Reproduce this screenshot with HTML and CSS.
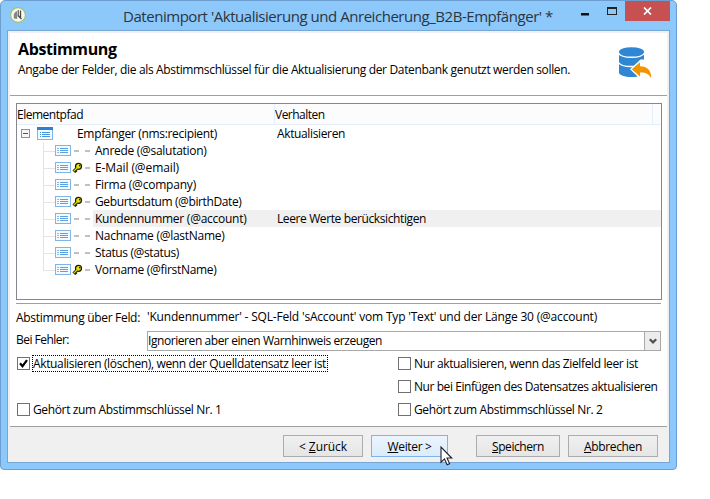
FILE: index.html
```
<!DOCTYPE html>
<html lang="de">
<head>
<meta charset="utf-8">
<title>Datenimport</title>
<link rel="stylesheet" href="styles.css">
</head>
<body>
<svg class="defs" width="0" height="0" aria-hidden="true">
  <defs>
    <g id="branch" shape-rendering="crispEdges">
      <path d="M27 9.5H38" stroke="#e4e4e4"/>
      <rect x="38.5" y="3.5" width="15" height="10" fill="#f4faff" stroke="#7fb6e8"/>
      <path d="M40 6.500h2M40 8.500h2M40 10.500h2" stroke="#8abcec"/>
      <path d="M43 6.500h8M43 8.500h8M43 10.500h8" stroke="#5ba1e2"/>
    </g>
    <g id="trunk"><path d="M26.500 0V17" stroke="#e4e4e4" shape-rendering="crispEdges"/></g>
    <g id="trunk-end"><path d="M26.500 0V10" stroke="#e4e4e4" shape-rendering="crispEdges"/></g>
    <g id="dash1"><rect x="57" y="8" width="5" height="2" fill="#c0c0c0"/></g>
    <g id="dash2"><rect x="68" y="8" width="5" height="2" fill="#c0c0c0"/></g>
    <g id="key">
      <path d="M60.500 8.500L56.500 12.500M58 11.500l1.500 1.500" stroke="#222200" stroke-width="3"/>
      <circle cx="61.500" cy="7.300" r="3" fill="#e8dd10" stroke="#222200" stroke-width="1.300"/>
      <path d="M60.500 8.500L56.800 12.200" stroke="#e8dd10" stroke-width="1.200"/>
      <rect x="62" y="6" width="1.300" height="1.300" fill="#222200"/>
    </g>
  </defs>
</svg>

<div class="window">
  <header class="titlebar">
    <svg class="app-icon" width="16" height="16" viewBox="0 0 16 16">
      <circle cx="8" cy="8" r="7.400" fill="#f8f8f4" stroke="#9fbf6a" stroke-width="1.100"/>
      <path d="M3.800 11.500V7l2-2.500 1.400-.5v8z" fill="#858585"/>
      <path d="M8.300 3v6" stroke="#666" stroke-width="1.200"/>
      <path d="M10.500 3.500v7" stroke="#444" stroke-width="1.300"/>
      <path d="M8 8.500l3.500 3.500" stroke="#444" stroke-width="1.200"/>
    </svg>
    <h1 class="title">Datenimport 'Aktualisierung und Anreicherung_B2B-Empfänger' *</h1>
    <svg class="min" width="8" height="3"><rect width="8" height="2.500" fill="#111"/></svg>
    <svg class="max" width="10" height="8" shape-rendering="crispEdges"><rect x=".5" y="1" width="9" height="6.500" fill="none" stroke="#222"/><path d="M0 1h10" stroke="#222" stroke-width="2"/></svg>
    <div class="close"><svg width="9" height="8" viewBox="0 0 9 8"><path d="M1 .5l7 7M8 .5l-7 7" stroke="#fff" stroke-width="1.700"/></svg></div>
  </header>

  <main class="client">
    <div class="page">
      <section class="intro">
        <div>
          <h2>Abstimmung</h2>
          <p class="t-intro">Angabe der Felder, die als Abstimmschlüssel für die Aktualisierung der Datenbank genutzt werden sollen.</p>
        </div>
        <svg class="db" width="34" height="34" viewBox="0 0 34 34">
          <path d="M1 5v20.500c0 2.700 5.600 4.500 12.500 4.500S26 28.200 26 25.500V5z" fill="#2f86d3"/>
          <ellipse cx="13.500" cy="4.700" rx="12.500" ry="4.500" fill="#2f86d3"/>
          <path d="M.5 6C2 9 7 10.300 13.500 10.300S25 9 26.500 6M.5 15.500c1.500 2.800 6.500 4 12.500 4 2 0 4-.2 6-.6" fill="none" stroke="#fff" stroke-width="1.400"/>
          <path d="M22.500 12.500L12 22.300l9.500 9h5.500V12.500z" fill="#fff"/>
          <path d="M13.800 22.300l8.200-7v3.900c7 .2 11.500 4 11.200 12.200-2-4.200-5.200-6-11.200-5.800v4z" fill="#f29400"/>
        </svg>
      </section>

      <section class="list">
        <div class="head"><span class="t-path">Elementpfad</span><span class="t-behaviour">Verhalten</span><span></span></div>
        <div class="row root">
          <svg width="60" height="17">
            <g shape-rendering="crispEdges"><rect x="4.500" y="4.500" width="8" height="8" fill="#f6f6f6" stroke="#919191"/><path d="M6 8.500h5" stroke="#3c50a0"/>
            <rect x="20.500" y="3.500" width="15" height="11" fill="#f4faff" stroke="#7fb6e8"/><path d="M20 3.500h16" stroke="#2f80d0" stroke-width="3"/>
            <path d="M23 7.500h1M23 9.500h1M23 11.500h1M25 7.500h8M25 9.500h8M25 11.500h8" stroke="#4595df"/></g>
          </svg><span class="t-recipient">Empfänger (nms:recipient)</span><span class="t-update">Aktualisieren</span>
        </div>
        <div class="row"><svg width="76" height="17"><use href="#trunk"/><use href="#branch"/><use href="#dash1"/><use href="#dash2"/></svg><span class="t-salutation">Anrede (@salutation)</span></div>
        <div class="row"><svg width="76" height="17"><use href="#trunk"/><use href="#branch"/><use href="#key"/><use href="#dash2"/></svg><span class="t-email">E-Mail (@email)</span></div>
        <div class="row"><svg width="76" height="17"><use href="#trunk"/><use href="#branch"/><use href="#dash1"/><use href="#dash2"/></svg><span class="t-company">Firma (@company)</span></div>
        <div class="row"><svg width="76" height="17"><use href="#trunk"/><use href="#branch"/><use href="#key"/><use href="#dash2"/></svg><span class="t-birth">Geburtsdatum (@birthDate)</span></div>
        <div class="row selected"><svg width="76" height="17"><use href="#trunk"/><use href="#branch"/><use href="#dash1"/><use href="#dash2"/></svg><span class="t-account">Kundennummer (@account)</span><span class="t-empty">Leere Werte berücksichtigen</span></div>
        <div class="row"><svg width="76" height="17"><use href="#trunk"/><use href="#branch"/><use href="#dash1"/><use href="#dash2"/></svg><span class="t-last">Nachname (@lastName)</span></div>
        <div class="row"><svg width="76" height="17"><use href="#trunk"/><use href="#branch"/><use href="#dash1"/><use href="#dash2"/></svg><span class="t-status">Status (@status)</span></div>
        <div class="row"><svg width="76" height="17"><use href="#trunk-end"/><use href="#branch"/><use href="#key"/><use href="#dash2"/></svg><span class="t-first">Vorname (@firstName)</span></div>
      </section>

      <section class="form">
        <div class="field first"><span class="label t-via">Abstimmung über Feld:</span><span class="t-sql">'Kundennummer' - SQL-Feld 'sAccount' vom Typ 'Text' und der Länge 30 (@account)</span></div>
        <div class="field second"><span class="label t-error">Bei Fehler:</span>
          <div class="select"><span class="t-ignore">Ignorieren aber einen Warnhinweis erzeugen</span><i><svg width="8" height="7" viewBox="0 0 8 7"><path d="M.8 1.200L4 4.400l3.200-3.200" fill="none" stroke="#505050" stroke-width="2.200"/></svg></i></div>
        </div>
        <div class="checks">
          <label><b class="box"><svg width="9" height="9" viewBox="0 0 9 9"><path d="M1 4.300l2.500 2.900L8 1.200" fill="none" stroke="#000" stroke-width="2.200"/></svg></b><span class="focus t-clear">Aktualisieren (löschen), wenn der Quelldatensatz leer ist</span></label>
          <label><b class="box"></b><span class="t-target">Nur aktualisieren, wenn das Zielfeld leer ist</span></label>
          <span></span>
          <label><b class="box"></b><span class="t-insert">Nur bei Einfügen des Datensatzes aktualisieren</span></label>
          <label><b class="box"></b><span class="t-key">Gehört zum Abstimmschlüssel Nr. 1</span></label>
          <label><b class="box"></b><span class="t-key">Gehört zum Abstimmschlüssel Nr. 2</span></label>
        </div>
      </section>
    </div>

    <footer class="actions">
      <div class="button back"><span>&lt; <u>Z</u>urück</span></div>
      <div class="button next"><span><u>W</u>eiter &gt;</span>
        <svg class="cursor" width="13" height="20" viewBox="0 0 13 20"><path d="M1 1v15.200l3.500-3.300 2.600 5.800 2.500-1.100-2.600-5.600h4.700z" fill="#fff" stroke="#20202a" stroke-width="1.100"/></svg>
      </div>
      <div class="button save"><span><u>S</u>peichern</span></div>
      <div class="button cancel"><span><u>A</u>bbrechen</span></div>
    </footer>
  </main>
</div>
</body>
</html>
```
FILE: styles.css
```
* { box-sizing: border-box; }
body { margin: 0; background: #fff; color: #000; font: 12px/17px "Open Sans", "Noto Sans", sans-serif; overflow: hidden; }
h1, h2, p { margin: 0; font-weight: normal; }
svg { display: block; flex: none; }
.defs { position: absolute; }

.window { width: 677px; height: 470px; padding: 0 6px; background: #8dc8fb; border: 1px solid #6c9fcf; border-radius: 5px 5px 4px 4px; }

.titlebar { height: 29px; display: flex; align-items: flex-start; }
.app-icon { margin: 6px 0 0 3px; }
.title { width: 440px; margin: 3px 0 0 97px; font-size: 15px; line-height: 24px; letter-spacing: -.46px; color: #2b3540; white-space: nowrap; }
.min { margin: 12px 0 0 18px; }
.max { margin: 6px 0 0 18px; }
.close { width: 45px; height: 20px; margin-left: 8px; display: flex; align-items: center; justify-content: center; background: #c75050; }

.client { height: 433px; padding: 2px; background: #f0f0f0; border: 1px solid #78a6d4; }
.page { width: 657px; height: 394px; background: #fff; border-bottom: 1px solid #a0a0a0; }

.intro { height: 63px; padding: 6px 15px 0 8px; display: flex; justify-content: space-between; border-bottom: 1px solid #a0a0a0; }
h2 { font-size: 16px; line-height: 20px; font-weight: bold; letter-spacing: -.39px; }
.intro p { margin-top: 2px; }
.db { margin-top: 8px; }

.list { width: 646px; height: 197px; margin: 7px 0 0 6px; border: 1px solid #828790; }
.head { height: 21px; display: grid; grid-template-columns: 257px 378px 9px; background: #fcfcfc; border-bottom: 1px solid #e5effb; line-height: 22px; }
.head span { height: 20px; border-left: 1px solid #e5effb; }
.head span:first-child { border: 0; }
.row { height: 17px; display: grid; grid-template-columns: 76px 183px 1fr; white-space: nowrap; }
.row.root { grid-template-columns: 60px 199px 1fr; }
.row span { padding-left: 2px; }
.row.root span { padding-left: 0; }
.row.root span + span, .row > span + span { padding-left: 1px; }
.row.selected span { background: #f0f0f0; }

.form { margin-left: 6px; width: 645px; margin-top: 3px; border-top: 1px solid #a0a0a0; }
.field { display: flex; white-space: nowrap; }
.label { width: 131px; }
.first { height: 27px; padding-top: 4px; }
.first .label { padding-top: 1px; }
.select { width: 514px; height: 20px; display: flex; justify-content: space-between; border: 1px solid #a9a9a9; line-height: 18px; }
.select i { width: 16px; display: flex; align-items: center; justify-content: center; background: #ececec; border-left: 1px solid #a9a9a9; }

.checks { margin-top: 1px; display: grid; grid-template-columns: 381px 264px; grid-auto-rows: 23px; align-items: center; }
.checks label { display: flex; align-items: center; white-space: nowrap; }
.box { width: 13px; height: 13px; margin: 0 3px 0 1px; display: flex; align-items: center; justify-content: center; border: 1px solid #707070; }
.focus { margin-left: -1px; padding: 0 2px 0 1px; outline: 1px dotted #000; outline-offset: -1px; }

.actions { height: 34px; display: flex; padding: 8px 0 0 273px; }
.button { height: 22px; display: flex; align-items: center; justify-content: center; border: 1px solid #acacac; background: linear-gradient(#f0f0f0, #e5e5e5); }
.back { width: 80px; margin-right: 8px; letter-spacing: -.065px; }
.next { position: relative; width: 77px; margin-right: 28px; border-color: #7eb4ea; background: linear-gradient(#ebf4fc, #dcecfc); letter-spacing: -.343px; }
.save { width: 84px; margin-right: 8px; letter-spacing: -.422px; }
.cancel { width: 90px; letter-spacing: -.347px; }
u { text-underline-offset: 1px; }
.cursor { position: absolute; left: 68px; top: 10px; }

.t-intro { letter-spacing: -.343px; }
.t-path { letter-spacing: -.483px; }
.t-behaviour { letter-spacing: -.525px; }
.t-recipient { letter-spacing: -.322px; }
.t-update { letter-spacing: -.365px; }
.t-salutation { letter-spacing: -.286px; }
.t-email { letter-spacing: -.105px; }
.t-company { letter-spacing: -.207px; }
.t-birth { letter-spacing: -.383px; }
.t-account { letter-spacing: -.257px; }
.t-empty { letter-spacing: -.39px; }
.t-last { letter-spacing: -.269px; }
.t-status { letter-spacing: -.366px; }
.t-first { letter-spacing: -.306px; }
.t-via { letter-spacing: -.307px; }
.t-sql { letter-spacing: -.191px; }
.t-error { letter-spacing: -.523px; }
.t-ignore { letter-spacing: -.428px; }
.t-clear { letter-spacing: -.353px; }
.t-target { letter-spacing: -.37px; }
.t-insert { letter-spacing: -.428px; }
.t-key { letter-spacing: -.359px; }
```
